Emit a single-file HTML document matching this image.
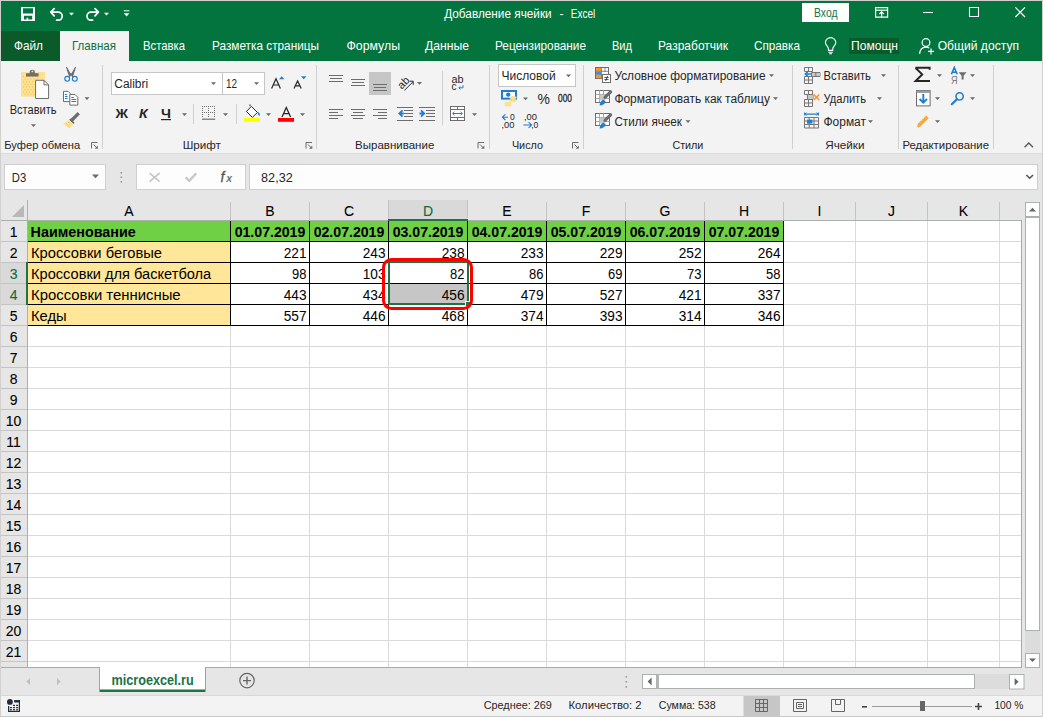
<!DOCTYPE html>
<html><head><meta charset="utf-8"><style>*{margin:0;padding:0}html,body{width:1043px;height:717px;overflow:hidden;background:#e6e6e6}svg{display:block}text{font-family:"Liberation Sans",sans-serif;white-space:pre}</style></head><body>
<svg width="1043" height="717" viewBox="0 0 1043 717" font-family="Liberation Sans">
<rect x="0" y="0" width="1043" height="717" fill="#d2cfcf" />
<rect x="1" y="1" width="1041" height="60" fill="#04743e" />
<text x="444.2" y="18.2" font-size="12" fill="#fff" textLength="107.50" lengthAdjust="spacingAndGlyphs">Добавление ячейки</text>
<text x="559.4" y="18.2" font-size="12" fill="#fff" textLength="4.00" lengthAdjust="spacingAndGlyphs">-</text>
<text x="570.7" y="18.2" font-size="12" fill="#fff" textLength="24.60" lengthAdjust="spacingAndGlyphs">Excel</text>
<rect x="802" y="3" width="47" height="19" fill="#fff" />
<text x="814" y="16.9" font-size="12" fill="#217346" textLength="23.50" lengthAdjust="spacingAndGlyphs">Вход</text>
<rect x="1" y="31" width="59" height="30" fill="#0a5a2a" />
<rect x="60" y="31" width="69" height="30" fill="#f3f3f3" />
<text x="14" y="49.9" font-size="12.2" fill="#fff" textLength="29.00" lengthAdjust="spacingAndGlyphs">Файл</text>
<text x="72" y="49.9" font-size="12.2" fill="#107040" textLength="44.00" lengthAdjust="spacingAndGlyphs">Главная</text>
<text x="143" y="49.9" font-size="12.2" fill="#fff" textLength="42.00" lengthAdjust="spacingAndGlyphs">Вставка</text>
<text x="212" y="49.9" font-size="12.2" fill="#fff" textLength="107.00" lengthAdjust="spacingAndGlyphs">Разметка страницы</text>
<text x="346.5" y="49.9" font-size="12.2" fill="#fff" textLength="53.50" lengthAdjust="spacingAndGlyphs">Формулы</text>
<text x="425" y="49.9" font-size="12.2" fill="#fff" textLength="44.00" lengthAdjust="spacingAndGlyphs">Данные</text>
<text x="495" y="49.9" font-size="12.2" fill="#fff" textLength="91.00" lengthAdjust="spacingAndGlyphs">Рецензирование</text>
<text x="612" y="49.9" font-size="12.2" fill="#fff" textLength="20.00" lengthAdjust="spacingAndGlyphs">Вид</text>
<text x="658" y="49.9" font-size="12.2" fill="#fff" textLength="70.00" lengthAdjust="spacingAndGlyphs">Разработчик</text>
<text x="754" y="49.9" font-size="12.2" fill="#fff" textLength="46.00" lengthAdjust="spacingAndGlyphs">Справка</text>
<rect x="849" y="38" width="50" height="16" fill="#0a5a2a" />
<text x="851" y="49.9" font-size="12.2" fill="#fff" textLength="47.00" lengthAdjust="spacingAndGlyphs">Помощн</text>
<text x="937.7" y="49.9" font-size="12.2" fill="#fff" textLength="81.30" lengthAdjust="spacingAndGlyphs">Общий доступ</text>
<rect x="1" y="61" width="1041" height="92" fill="#f3f3f3" />
<rect x="1" y="153" width="1041" height="1" fill="#dadada" />
<rect x="1" y="154" width="1041" height="46" fill="#e6e6e6" />
<rect x="102" y="65" width="1" height="84" fill="#d0d0d0" />
<rect x="316" y="65" width="1" height="84" fill="#d0d0d0" />
<rect x="489" y="65" width="1" height="84" fill="#d0d0d0" />
<rect x="583" y="65" width="1" height="84" fill="#d0d0d0" />
<rect x="792" y="65" width="1" height="84" fill="#d0d0d0" />
<rect x="898" y="65" width="1" height="84" fill="#d0d0d0" />
<rect x="993" y="65" width="1" height="84" fill="#d0d0d0" />
<text x="4.2" y="148.8" font-size="11" fill="#262626" textLength="76.00" lengthAdjust="spacingAndGlyphs">Буфер обмена</text>
<text x="182.7" y="148.8" font-size="11" fill="#262626" textLength="38.20" lengthAdjust="spacingAndGlyphs">Шрифт</text>
<text x="355.1" y="148.8" font-size="11" fill="#262626" textLength="79.20" lengthAdjust="spacingAndGlyphs">Выравнивание</text>
<text x="511.9" y="148.8" font-size="11" fill="#262626" textLength="31.10" lengthAdjust="spacingAndGlyphs">Число</text>
<text x="672.4" y="148.8" font-size="11" fill="#262626" textLength="31.00" lengthAdjust="spacingAndGlyphs">Стили</text>
<text x="825.2" y="148.8" font-size="11" fill="#262626" textLength="39.30" lengthAdjust="spacingAndGlyphs">Ячейки</text>
<text x="902.4" y="148.8" font-size="11" fill="#262626" textLength="86.60" lengthAdjust="spacingAndGlyphs">Редактирование</text>
<path fill-rule="evenodd" fill="#ffffff" d="M21 7h14v14h-14zM23 8.2v5.4h10v-5.4zM24 15.8v3.8h2.6v-1.8h1.6v1.8h4v-3.8z"/>
<g fill="none" stroke="#ffffff" stroke-width="1.7" stroke-linecap="round" stroke-linejoin="round"><path d="M51 12.2h7.2a4 4 0 0 1 0 8h-1.6"/><path d="M54.2 8.6l-3.4 3.6l3.4 3.6"/></g>
<path d="M69 12.8h5l-2.5 2.75z" fill="#ffffff"/>
<g fill="none" stroke="#ffffff" stroke-width="1.7" stroke-linecap="round" stroke-linejoin="round"><path d="M98.2 12.2h-7.2a4 4 0 0 0 0 8h1.6"/><path d="M95 8.6l3.4 3.6l-3.4 3.6"/></g>
<path d="M104 12.8h5l-2.5 2.75z" fill="#ffffff"/>
<path d="M123.8 10.8h5.6" stroke="#ffffff" stroke-width="1"/>
<path d="M123.8 13.3h5.6l-2.8 3.08z" fill="#ffffff"/>
<g fill="none" stroke="#ffffff" stroke-width="1.2"><path d="M875.6 7.6h12v9.6h-12z"/><path d="M875.6 10.2h12"/><path d="M881.6 17v-5.2"/><path d="M879.4 14l2.2-2.2l2.2 2.2"/></g>
<path d="M923 12.5h10" stroke="#ffffff" stroke-width="1.1"/>
<path d="M969.5 7.5h9v9h-9z" fill="none" stroke="#ffffff" stroke-width="1.1"/>
<path d="M1015.4 7.4l9.6 9.6M1025 7.4l-9.6 9.6" stroke="#ffffff" stroke-width="1.2"/>
<g fill="none" stroke="#ffffff" stroke-width="1.1"><path d="M828.4 50.4v-2c0-1.6-3-3.2-3-5.6a5.2 5.2 0 0 1 10.4 0c0 2.4-3 4-3 5.6v2z"/><path d="M828.4 52.2h4.4M829.2 53.8h2.8"/></g>
<g fill="none" stroke="#ffffff" stroke-width="1.2"><circle cx="926" cy="42.6" r="3.9"/><path d="M919.6 54c0.4-4.6 2.8-6.8 6.4-6.8c1.4 0 2.4 0.3 3.3 0.8"/><path d="M931 48.4v6M928 51.4h6"/></g>
<rect x="21" y="72" width="24" height="24.6" fill="#fde18e"/>
<g fill="#f0a030" opacity="0.55"><rect x="23.0" y="76.0" width="1" height="1"/><rect x="26.0" y="76.0" width="1" height="1"/><rect x="29.0" y="76.0" width="1" height="1"/><rect x="32.0" y="76.0" width="1" height="1"/><rect x="35.0" y="76.0" width="1" height="1"/><rect x="24.5" y="78.6" width="1" height="1"/><rect x="27.5" y="78.6" width="1" height="1"/><rect x="30.5" y="78.6" width="1" height="1"/><rect x="33.5" y="78.6" width="1" height="1"/><rect x="36.5" y="78.6" width="1" height="1"/><rect x="23.0" y="81.2" width="1" height="1"/><rect x="26.0" y="81.2" width="1" height="1"/><rect x="29.0" y="81.2" width="1" height="1"/><rect x="32.0" y="81.2" width="1" height="1"/><rect x="35.0" y="81.2" width="1" height="1"/><rect x="24.5" y="83.8" width="1" height="1"/><rect x="27.5" y="83.8" width="1" height="1"/><rect x="30.5" y="83.8" width="1" height="1"/><rect x="33.5" y="83.8" width="1" height="1"/><rect x="36.5" y="83.8" width="1" height="1"/><rect x="23.0" y="86.4" width="1" height="1"/><rect x="26.0" y="86.4" width="1" height="1"/><rect x="29.0" y="86.4" width="1" height="1"/><rect x="32.0" y="86.4" width="1" height="1"/><rect x="35.0" y="86.4" width="1" height="1"/><rect x="24.5" y="89.0" width="1" height="1"/><rect x="27.5" y="89.0" width="1" height="1"/><rect x="30.5" y="89.0" width="1" height="1"/><rect x="33.5" y="89.0" width="1" height="1"/><rect x="36.5" y="89.0" width="1" height="1"/><rect x="23.0" y="91.6" width="1" height="1"/><rect x="26.0" y="91.6" width="1" height="1"/><rect x="29.0" y="91.6" width="1" height="1"/><rect x="32.0" y="91.6" width="1" height="1"/><rect x="35.0" y="91.6" width="1" height="1"/><rect x="24.5" y="94.2" width="1" height="1"/><rect x="27.5" y="94.2" width="1" height="1"/><rect x="30.5" y="94.2" width="1" height="1"/><rect x="33.5" y="94.2" width="1" height="1"/><rect x="36.5" y="94.2" width="1" height="1"/></g>
<path d="M26 76.5v-3.2h3.8v-2.2a3 3 0 0 1 5 0v2.2h3.8v3.2z" fill="#6d6d6d"/>
<circle cx="32.4" cy="71.4" r="0.9" fill="#fde18e"/>
<path d="M35.6 80.3h8.4l4.6 4.6v13.6h-13z" fill="#fff" stroke="#6d6d6d" stroke-width="1"/>
<path d="M44 80.3v4.6h4.6" fill="none" stroke="#6d6d6d" stroke-width="1"/>
<path d="M31 124.3h5l-2.5 2.75z" fill="#6a6a6a"/>
<path d="M66.6 67.4l3.6 6.6l-0.6 2.6z M75.4 67.4l-3.6 6.6l0.6 2.6z" fill="#6d6d6d" stroke="#6d6d6d" stroke-width="1.1" stroke-linejoin="round"/>
<circle cx="71" cy="74.6" r="1.3" fill="#6d6d6d"/>
<g fill="none" stroke="#1e7fd0" stroke-width="1.15"><circle cx="67.2" cy="78.8" r="2.4"/><circle cx="74.8" cy="78.8" r="2.4"/></g>
<g fill="#fff" stroke="#6d6d6d" stroke-width="1"><path d="M63.5 91.3h4.6l2.2 2.2v8.1h-6.8z"/><path d="M69.8 94.5h5.2l2.8 2.8v7.8h-8z"/></g>
<g stroke="#1e7fd0" stroke-width="1"><path d="M65 94.5h2M65 96.5h2.6M65 98.5h2.6"/><path d="M71.4 97.5h2.4M71.4 99.5h4.8M71.4 101.5h4.8"/></g>
<path d="M84.5 97.3h5l-2.5 2.75z" fill="#6a6a6a"/>
<path d="M77.6 114.4l-5.4 5.4" stroke="#6d6d6d" stroke-width="3.4" stroke-linecap="square"/>
<path d="M70.4 118.6l4.2 4.2l-1.2 1.2l-4.2-4.2z" fill="#6d6d6d"/>
<path d="M68.8 120.2l4.2 4.2l-3.4 4l-6.6-4.6z" fill="#fde18e"/>
<path d="M66.4 123.6l0.8 0.8M68.6 122.4l0.8 0.8M68 125.6l0.8 0.8" stroke="#f0a030" stroke-width="0.9"/>
<rect x="111.5" y="72.5" width="111" height="22" fill="#fff" stroke="#c6c6c6"/>
<rect x="222.5" y="72.5" width="42" height="22" fill="#fff" stroke="#c6c6c6"/>
<path d="M211 82.3h5l-2.5 2.75z" fill="#6a6a6a"/>
<path d="M254 82.3h5l-2.5 2.75z" fill="#6a6a6a"/>
<path d="M271.6 88.6l4.4-9.8l4.4 9.8M273.2 85h5.6" fill="none" stroke="#262626" stroke-width="1.2"/>
<path d="M279 79.2l2.7-3l2.7 3z" fill="#1e7fd0"/>
<path d="M294 88.6l3.6-7.6l3.6 7.6M295.4 85.8h4.4" fill="none" stroke="#262626" stroke-width="1.2"/>
<path d="M301 76.2h5.4l-2.7 3z" fill="#1e7fd0"/>
<rect x="161" y="119" width="10" height="1.2" fill="#262626"/>
<path d="M182 113.3h5l-2.5 2.75z" fill="#6a6a6a"/>
<rect x="193" y="104" width="1" height="20" fill="#d0d0d0"/>
<g fill="#6d6d6d"><rect x="202" y="106" width="1" height="1"/><rect x="202" y="112" width="1" height="1"/><rect x="204" y="106" width="1" height="1"/><rect x="204" y="112" width="1" height="1"/><rect x="206" y="106" width="1" height="1"/><rect x="206" y="112" width="1" height="1"/><rect x="208" y="106" width="1" height="1"/><rect x="208" y="112" width="1" height="1"/><rect x="210" y="106" width="1" height="1"/><rect x="210" y="112" width="1" height="1"/><rect x="212" y="106" width="1" height="1"/><rect x="212" y="112" width="1" height="1"/><rect x="214" y="106" width="1" height="1"/><rect x="214" y="112" width="1" height="1"/><rect x="202" y="106" width="1" height="1"/><rect x="202" y="108" width="1" height="1"/><rect x="202" y="110" width="1" height="1"/><rect x="202" y="112" width="1" height="1"/><rect x="202" y="114" width="1" height="1"/><rect x="202" y="116" width="1" height="1"/><rect x="208" y="106" width="1" height="1"/><rect x="208" y="108" width="1" height="1"/><rect x="208" y="110" width="1" height="1"/><rect x="208" y="112" width="1" height="1"/><rect x="208" y="114" width="1" height="1"/><rect x="208" y="116" width="1" height="1"/><rect x="214" y="106" width="1" height="1"/><rect x="214" y="108" width="1" height="1"/><rect x="214" y="110" width="1" height="1"/><rect x="214" y="112" width="1" height="1"/><rect x="214" y="114" width="1" height="1"/><rect x="214" y="116" width="1" height="1"/></g>
<rect x="202" y="118.6" width="13.2" height="1.2" fill="#6d6d6d"/>
<path d="M223 113.3h5l-2.5 2.75z" fill="#6a6a6a"/>
<rect x="236" y="104" width="1" height="20" fill="#d0d0d0"/>
<path d="M246.4 111.4l5-5l6 6l-5 5z" fill="#fff" stroke="#262626" stroke-width="1"/>
<path d="M250 106.2v-1.8" stroke="#262626" stroke-width="1"/>
<path d="M257.6 112.4c1.2-0.6 2.6 1 2.2 3.6c-1-0.4-2.4-2-2.2-3.6z" fill="#1e7fd0"/>
<rect x="244" y="118" width="16" height="3.8" fill="#ffff00"/>
<path d="M266 113.3h5l-2.5 2.75z" fill="#6a6a6a"/>
<path d="M282 117l4.3-9.4l4.3 9.4M283.6 113.6h5.4" fill="none" stroke="#262626" stroke-width="1.3"/>
<rect x="278" y="118" width="16" height="3.8" fill="#ff0000"/>
<path d="M300 113.3h5l-2.5 2.75z" fill="#6a6a6a"/>
<rect x="369" y="72" width="22" height="23" fill="#c6c6c6"/>
<rect x="329" y="75" width="14" height="1" fill="#6d6d6d"/><rect x="330" y="78" width="12" height="1" fill="#6d6d6d"/><rect x="329" y="81" width="14" height="1" fill="#6d6d6d"/>
<rect x="351" y="79" width="14" height="1" fill="#6d6d6d"/><rect x="352" y="82" width="12" height="1" fill="#6d6d6d"/><rect x="351" y="85" width="14" height="1" fill="#6d6d6d"/>
<rect x="373" y="84" width="14" height="1" fill="#6d6d6d"/><rect x="374" y="87" width="12" height="1" fill="#6d6d6d"/><rect x="373" y="90" width="14" height="1" fill="#6d6d6d"/>
<g transform="translate(403.6 82.6) rotate(-45)"><text x="-6.4" y="3.6" font-family="Liberation Sans" font-size="11" fill="#262626">ab</text></g>
<path d="M404.4 90.4l8.4-8.4M409.6 81.2h3.6v3.6" fill="none" stroke="#262626" stroke-width="1"/>
<path d="M417 82h5l-2.5 2.75z" fill="#6a6a6a"/>
<rect x="442" y="71" width="1" height="54" fill="#d0d0d0"/>
<text x="451.6" y="83" font-family="Liberation Sans" font-size="10" fill="#262626" textLength="12" lengthAdjust="spacingAndGlyphs">ab</text>
<text x="451.6" y="90" font-family="Liberation Sans" font-size="10" fill="#262626">c</text>
<path d="M463 85.2v2.6h-4M460.4 86.4l-1.6 1.4l1.6 1.4" fill="none" stroke="#1e7fd0" stroke-width="1"/>
<rect x="329" y="109" width="14" height="1" fill="#6d6d6d"/><rect x="329" y="112" width="9" height="1" fill="#6d6d6d"/><rect x="329" y="115" width="14" height="1" fill="#6d6d6d"/><rect x="329" y="118" width="9" height="1" fill="#6d6d6d"/>
<rect x="351" y="109" width="14" height="1" fill="#6d6d6d"/><rect x="353" y="112" width="10" height="1" fill="#6d6d6d"/><rect x="351" y="115" width="14" height="1" fill="#6d6d6d"/><rect x="353" y="118" width="10" height="1" fill="#6d6d6d"/>
<rect x="373" y="109" width="14" height="1" fill="#6d6d6d"/><rect x="378" y="112" width="9" height="1" fill="#6d6d6d"/><rect x="373" y="115" width="14" height="1" fill="#6d6d6d"/><rect x="378" y="118" width="9" height="1" fill="#6d6d6d"/>
<rect x="397" y="107" width="16" height="1" fill="#6d6d6d"/><rect x="397" y="120" width="16" height="1" fill="#6d6d6d"/>
<rect x="404" y="110" width="9" height="1" fill="#6d6d6d"/><rect x="404" y="113" width="9" height="1" fill="#6d6d6d"/><rect x="404" y="116" width="9" height="1" fill="#6d6d6d"/>
<path d="M402.5 110.4l-3.2 3.1l3.2 3.1M399.6 113.5h4.2" fill="none" stroke="#1e7fd0" stroke-width="1.8"/>
<rect x="419" y="107" width="16" height="1" fill="#6d6d6d"/><rect x="419" y="120" width="16" height="1" fill="#6d6d6d"/>
<rect x="426" y="110" width="9" height="1" fill="#6d6d6d"/><rect x="426" y="113" width="9" height="1" fill="#6d6d6d"/><rect x="426" y="116" width="9" height="1" fill="#6d6d6d"/>
<path d="M421 110.4l3.2 3.1l-3.2 3.1M419.5 113.5h4.5" fill="none" stroke="#1e7fd0" stroke-width="1.8"/>
<rect x="450.5" y="106.5" width="14" height="14" fill="#fff" stroke="#6d6d6d" stroke-width="1"/>
<path d="M450.5 109.5h14M450.5 117.5h14M457.5 106.5v3M457.5 117.5v3" stroke="#6d6d6d" stroke-width="1"/>
<path d="M452.5 113.5h10M454.5 111.8l-1.8 1.7l1.8 1.7M460.5 111.8l1.8 1.7l-1.8 1.7" fill="none" stroke="#1e7fd0" stroke-width="1"/>
<path d="M472 113.3h5l-2.5 2.75z" fill="#6a6a6a"/>
<rect x="498.5" y="64.5" width="77" height="22" fill="#fff" stroke="#c6c6c6"/>
<path d="M566 74.6h5l-2.5 2.75z" fill="#6a6a6a"/>
<rect x="501" y="90" width="16" height="9.6" fill="#1e7fd0"/>
<rect x="503" y="92" width="12" height="5.6" fill="#fff"/>
<circle cx="508.2" cy="94.6" r="2.2" fill="#1e7fd0"/>
<g fill="#fde18e"><ellipse cx="513" cy="97.6" rx="3.6" ry="1.5"/><ellipse cx="513" cy="100.6" rx="3.6" ry="1.5"/><ellipse cx="508" cy="103" rx="3.6" ry="1.5"/><ellipse cx="508" cy="105.2" rx="3.6" ry="1.3"/></g>
<path d="M523 97.6h5l-2.5 2.75z" fill="#6a6a6a"/>
<text x="537.6" y="104.4" font-family="Liberation Sans" font-size="14" fill="#262626" textLength="12.4" lengthAdjust="spacingAndGlyphs">%</text>
<text x="558" y="101.6" font-family="Liberation Sans" font-size="10.2" fill="#262626" stroke="#262626" stroke-width="0.3" textLength="14" lengthAdjust="spacingAndGlyphs">000</text>
<text x="510" y="120" font-family="Liberation Sans" font-size="8.5" fill="#262626">0</text>
<text x="501.4" y="127.6" font-family="Liberation Sans" font-size="8.5" fill="#262626" textLength="13" lengthAdjust="spacingAndGlyphs">,00</text>
<path d="M505.4 114.4l-3 2.8l3 2.8M502.6 117.2h5.4" fill="none" stroke="#1e7fd0" stroke-width="1.1"/>
<text x="524" y="120" font-family="Liberation Sans" font-size="8.5" fill="#262626" textLength="13" lengthAdjust="spacingAndGlyphs">,00</text>
<text x="531.2" y="127.6" font-family="Liberation Sans" font-size="8.5" fill="#262626">,0</text>
<path d="M528.6 122.2l3 2.8l-3 2.8M523.4 125h7.6" fill="none" stroke="#1e7fd0" stroke-width="1.1"/>
<rect x="595.5" y="67.5" width="13" height="11" fill="#fff" stroke="#6d6d6d"/>
<rect x="596" y="68" width="5" height="3" fill="#f79433"/><rect x="596" y="71.6" width="5" height="3" fill="#3c8fd8"/><rect x="596" y="75.2" width="5" height="3" fill="#f79433"/>
<path d="M601.5 68v10M595.5 71.3h13M595.5 74.8h13M605 68v4" stroke="#6d6d6d" stroke-width="0.8"/>
<rect x="602.5" y="74.5" width="8" height="8" fill="#fff" stroke="#6d6d6d"/>
<path d="M604.4 77.4h4.2M604.4 79.4h4.2M607.6 76l-2 5" stroke="#262626" stroke-width="0.8"/>
<path d="M769 74.3h5l-2.5 2.75z" fill="#6a6a6a"/>
<rect x="595.5" y="90.5" width="14" height="12" fill="#fff" stroke="#6d6d6d"/>
<path d="M599.5 90v12M603.5 90v12M595.5 94.5h14M595.5 98.5h14" stroke="#9a9a9a" stroke-width="0.9"/>
<rect x="599.5" y="94.5" width="6" height="6" fill="#c8c8c8"/>
<path d="M610.6 91.8l-5.6 5.6" stroke="#6d6d6d" stroke-width="3.2" stroke-linecap="round"/>
<path d="M603.4 99.4l2.4 2.4c-0.8 2-2.8 3.6-6.2 3.8c0.3-3 1.6-5.4 3.8-6.2z" fill="#1e7fd0"/>
<rect x="595.5" y="113.5" width="14" height="12" fill="#fff" stroke="#6d6d6d"/>
<path d="M599.5 113v12M603.5 113v12M595.5 117.5h14M595.5 121.5h14" stroke="#9a9a9a" stroke-width="0.9"/>
<rect x="599.5" y="117.5" width="6" height="6" fill="#c8c8c8"/>
<path d="M610.6 114.8l-5.6 5.6" stroke="#6d6d6d" stroke-width="3.2" stroke-linecap="round"/>
<path d="M603.4 122.4l2.4 2.4c-0.8 2-2.8 3.6-6.2 3.8c0.3-3 1.6-5.4 3.8-6.2z" fill="#1e7fd0"/>
<path d="M773 97.3h5l-2.5 2.75z" fill="#6a6a6a"/>
<path d="M685.5 120.3h5l-2.5 2.75z" fill="#6a6a6a"/>
<g fill="none" stroke="#777777" stroke-width="1"><path d="M804.5 67.5h8v4h-8zM808.5 67.5v4"/><path d="M804.5 76.5h8v7h-8zM804.5 80h8M808.5 76.5v7"/><path d="M811.5 72.5h8.5v4h-8.5zM815.8 72.5v4"/></g>
<rect x="812" y="73" width="7.6" height="3" fill="#c8c8c8"/>
<path d="M815.8 72.5v4" stroke="#777777"/>
<path d="M808.2 71.2l-2.8 2.8l2.8 2.8M805.6 74h5.6" fill="none" stroke="#1e7fd0" stroke-width="1.6"/>
<path d="M881 74.3h5l-2.5 2.75z" fill="#6a6a6a"/>
<g fill="none" stroke="#777777" stroke-width="1"><path d="M804.5 90.5h8v4h-8zM808.5 90.5v4"/><path d="M804.5 99.5h8v7h-8zM804.5 103h8M808.5 99.5v7"/><path d="M807.5 94.5h5.5v5h-5.5z"/></g>
<rect x="808" y="95" width="4.6" height="4" fill="#c8c8c8"/>
<path d="M813.8 94.6l5.4 5.4M819.2 94.6l-5.4 5.4" stroke="#f7943a" stroke-width="1.5"/>
<path d="M877 97.3h5l-2.5 2.75z" fill="#6a6a6a"/>
<path d="M804.6 112.6v3M818.4 112.6v3M805 114.1h13" stroke="#1e7fd0" stroke-width="1.1"/>
<path d="M806.4 112.6l-1.4 1.5l1.4 1.5M816.6 112.6l1.4 1.5l-1.4 1.5" fill="none" stroke="#1e7fd0" stroke-width="0.9"/>
<g fill="none" stroke="#777777" stroke-width="1"><path d="M804.5 117.5h14v10.5h-14z"/><path d="M804.5 121h14M804.5 124.5h14M809.2 117.5v10.5M814 117.5v10.5"/></g>
<rect x="807" y="119.6" width="5.4" height="4" fill="#1e7fd0"/>
<path d="M868 120.3h5l-2.5 2.75z" fill="#6a6a6a"/>
<path d="M915.4 67.8h14.2v2M930 81h-14.4l6.6-6.6l-6.6-6.4" fill="none" stroke="#262626" stroke-width="2"/>
<path d="M937 74.3h5l-2.5 2.75z" fill="#6a6a6a"/>
<path d="M951.4 74.2l2.9-6.6l2.9 6.6M952.4 72.2h3.8" fill="none" stroke="#1e7fd0" stroke-width="1.6"/>
<text x="951" y="83.6" font-family="Liberation Sans" font-size="10" fill="#7a7a7a" textLength="6.6" lengthAdjust="spacingAndGlyphs">Я</text>
<path d="M958.6 72.2h8l-3 3.6v3.6h-2v-3.6z" fill="#6d6d6d"/>
<path d="M970 74.3h5l-2.5 2.75z" fill="#6a6a6a"/>
<rect x="916.5" y="90.5" width="13.6" height="15.4" fill="#fff" stroke="#6d6d6d"/>
<rect x="916.5" y="90.5" width="13.6" height="2.4" fill="#9a9a9a"/>
<path d="M923.3 94v8.6M919.6 99l3.7 3.6l3.7-3.6" fill="none" stroke="#1e7fd0" stroke-width="1.9"/>
<path d="M935 97.3h5l-2.5 2.75z" fill="#6a6a6a"/>
<circle cx="959.6" cy="96.4" r="3.6" fill="none" stroke="#1e7fd0" stroke-width="1.6"/>
<path d="M957 99.2l-5.2 5" stroke="#1e7fd0" stroke-width="2.2" stroke-linecap="round"/>
<path d="M970 97.3h5l-2.5 2.75z" fill="#6a6a6a"/>
<path d="M917.4 124.2l8.6-8.6l2.6 2.6l-8.6 8.6z" fill="#f7a534"/>
<g fill="#fde18e"><rect x="919.6" y="121.6" width="1" height="1"/><rect x="921.3" y="119.9" width="1" height="1"/><rect x="923.0" y="118.2" width="1" height="1"/><rect x="924.7" y="116.5" width="1" height="1"/><rect x="926.4" y="114.8" width="1" height="1"/></g>
<path d="M916.8 126.2l1.8-1.8l1.6 1.6l-1.8 1.8z" fill="#f7a534"/>
<path d="M935 120.3h5l-2.5 2.75z" fill="#6a6a6a"/>
<g fill="none" stroke="#6d6d6d" stroke-width="1"><path d="M91.5 148.5v-6h6"/><path d="M93.5 144.5l3.6 3.6"/></g><path d="M94.6 148.8h3.2v-3.2z" fill="#6d6d6d"/>
<g fill="none" stroke="#6d6d6d" stroke-width="1"><path d="M306.0 148.5v-6h6"/><path d="M308.0 144.5l3.6 3.6"/></g><path d="M309.1 148.8h3.2v-3.2z" fill="#6d6d6d"/>
<g fill="none" stroke="#6d6d6d" stroke-width="1"><path d="M478.0 148.5v-6h6"/><path d="M480.0 144.5l3.6 3.6"/></g><path d="M481.1 148.8h3.2v-3.2z" fill="#6d6d6d"/>
<g fill="none" stroke="#6d6d6d" stroke-width="1"><path d="M572.5 148.5v-6h6"/><path d="M574.5 144.5l3.6 3.6"/></g><path d="M575.6 148.8h3.2v-3.2z" fill="#6d6d6d"/>
<path d="M1024.6 147.2l4.2-4.2l4.2 4.2" fill="none" stroke="#555" stroke-width="1.3"/>
<text x="9.7" y="114.3" font-size="12" fill="#262626" textLength="46.80" lengthAdjust="spacingAndGlyphs">Вставить</text>
<text x="114.3" y="88" font-size="12.5" fill="#262626" textLength="33.80" lengthAdjust="spacingAndGlyphs">Calibri</text>
<text x="226" y="88" font-size="12.5" fill="#262626" textLength="11.00" lengthAdjust="spacingAndGlyphs">12</text>
<text x="115.5" y="118" font-size="12" fill="#262626" font-weight="bold" textLength="12.50" lengthAdjust="spacingAndGlyphs">Ж</text>
<text x="139" y="118" font-size="12" font-weight="bold" font-style="italic" fill="#262626" textLength="8.7" lengthAdjust="spacingAndGlyphs">К</text>
<text x="161" y="118" font-size="12" fill="#262626" font-weight="bold" textLength="10.00" lengthAdjust="spacingAndGlyphs">Ч</text>
<text x="501.5" y="79.7" font-size="12.5" fill="#262626" textLength="54.20" lengthAdjust="spacingAndGlyphs">Числовой</text>
<text x="614.4" y="79.8" font-size="12" fill="#262626" textLength="151.20" lengthAdjust="spacingAndGlyphs">Условное форматирование</text>
<text x="614.4" y="102.7" font-size="12" fill="#262626" textLength="155.50" lengthAdjust="spacingAndGlyphs">Форматировать как таблицу</text>
<text x="614.4" y="125.6" font-size="12" fill="#262626" textLength="67.60" lengthAdjust="spacingAndGlyphs">Стили ячеек</text>
<text x="823.5" y="79.8" font-size="12" fill="#262626" textLength="47.40" lengthAdjust="spacingAndGlyphs">Вставить</text>
<text x="823.5" y="102.7" font-size="12" fill="#262626" textLength="42.50" lengthAdjust="spacingAndGlyphs">Удалить</text>
<text x="823.5" y="125.6" font-size="12" fill="#262626" textLength="42.50" lengthAdjust="spacingAndGlyphs">Формат</text>
<rect x="4.5" y="164.5" width="101" height="25" fill="#fdfdfd" stroke="#cfcfcf"/>
<text x="11.8" y="181.8" font-size="12.5" fill="#262626" textLength="14.40" lengthAdjust="spacingAndGlyphs">D3</text>
<path d="M92 174.4h7l-3.5 3.85z" fill="#6a6a6a"/>
<rect x="120.5" y="172" width="1.6" height="1.6" fill="#9a9a9a" />
<rect x="120.5" y="176.5" width="1.6" height="1.6" fill="#9a9a9a" />
<rect x="120.5" y="181" width="1.6" height="1.6" fill="#9a9a9a" />
<rect x="136.5" y="164.5" width="109" height="25" fill="#fdfdfd" stroke="#cfcfcf"/>
<path d="M149.6 173.2l10 8.4M159.6 173.2l-10 8.4" stroke="#c4c4c4" stroke-width="1.6"/>
<path d="M185.6 177.2l3.6 3.6l7-7.4" fill="none" stroke="#c8c8c8" stroke-width="2.3"/>
<text x="220.6" y="182" font-family="Liberation Serif" font-style="italic" font-size="14" fill="#555" stroke="#555" stroke-width="0.3">f</text><text x="226.4" y="182" font-family="Liberation Serif" font-style="italic" font-size="10.5" fill="#555" stroke="#555" stroke-width="0.2">x</text>
<rect x="249.5" y="164.5" width="788" height="25" fill="#fdfdfd" stroke="#cfcfcf"/>
<text x="261.1" y="181.9" font-size="12.5" fill="#262626" textLength="31.60" lengthAdjust="spacingAndGlyphs">82,32</text>
<path d="M1026.4 175l3.3 3.2l3.3-3.2" fill="none" stroke="#555" stroke-width="1.6"/>
<rect x="1" y="200" width="1021" height="467" fill="#e6e6e6" />
<rect x="28" y="221" width="993" height="446" fill="#fff" />
<rect x="230" y="202" width="1" height="18" fill="#c4c4c4" />
<text x="129.0" y="215.6" font-size="14" text-anchor="middle" fill="#000000" stroke="#000000" stroke-width="0.08">A</text>
<rect x="309" y="202" width="1" height="18" fill="#c4c4c4" />
<text x="270.0" y="215.6" font-size="14" text-anchor="middle" fill="#000000" stroke="#000000" stroke-width="0.08">B</text>
<rect x="388" y="202" width="1" height="18" fill="#c4c4c4" />
<text x="349.0" y="215.6" font-size="14" text-anchor="middle" fill="#000000" stroke="#000000" stroke-width="0.08">C</text>
<rect x="389" y="200" width="78" height="20" fill="#d9d9d9" />
<rect x="388" y="200" width="1" height="20" fill="#c4c4c4" />
<rect x="467" y="200" width="1" height="18" fill="#c4c4c4" />
<text x="428.0" y="215.6" font-size="14" text-anchor="middle" fill="#0f6b38" stroke="#0f6b38" stroke-width="0.08">D</text>
<rect x="546" y="202" width="1" height="18" fill="#c4c4c4" />
<text x="507.0" y="215.6" font-size="14" text-anchor="middle" fill="#000000" stroke="#000000" stroke-width="0.08">E</text>
<rect x="625" y="202" width="1" height="18" fill="#c4c4c4" />
<text x="586.0" y="215.6" font-size="14" text-anchor="middle" fill="#000000" stroke="#000000" stroke-width="0.08">F</text>
<rect x="704" y="202" width="1" height="18" fill="#c4c4c4" />
<text x="665.0" y="215.6" font-size="14" text-anchor="middle" fill="#000000" stroke="#000000" stroke-width="0.08">G</text>
<rect x="783" y="202" width="1" height="18" fill="#c4c4c4" />
<text x="744.0" y="215.6" font-size="14" text-anchor="middle" fill="#000000" stroke="#000000" stroke-width="0.08">H</text>
<rect x="855" y="202" width="1" height="18" fill="#c4c4c4" />
<text x="819.5" y="215.6" font-size="14" text-anchor="middle" fill="#000000" stroke="#000000" stroke-width="0.08">I</text>
<rect x="927" y="202" width="1" height="18" fill="#c4c4c4" />
<text x="891.5" y="215.6" font-size="14" text-anchor="middle" fill="#000000" stroke="#000000" stroke-width="0.08">J</text>
<rect x="999" y="202" width="1" height="18" fill="#c4c4c4" />
<text x="963.5" y="215.6" font-size="14" text-anchor="middle" fill="#000000" stroke="#000000" stroke-width="0.08">K</text>
<rect x="388" y="219" width="80" height="2" fill="#217346" />
<rect x="1" y="220" width="1021" height="1" fill="#abb0ad" />
<rect x="27" y="200" width="1" height="467" fill="#abb0ad" />
<path d="M12 217h12v-12z" fill="#b6b9b7"/>
<rect x="1" y="241" width="26" height="1" fill="#c4c4c4" />
<text x="13.6" y="236.7" font-size="14" text-anchor="middle" fill="#000000" stroke="#000000" stroke-width="0.08">1</text>
<rect x="1" y="262" width="26" height="1" fill="#c4c4c4" />
<text x="13.6" y="257.7" font-size="14" text-anchor="middle" fill="#000000" stroke="#000000" stroke-width="0.08">2</text>
<rect x="1" y="263" width="26" height="20" fill="#d9d9d9" />
<rect x="1" y="283" width="26" height="1" fill="#c4c4c4" />
<text x="13.6" y="278.7" font-size="14" text-anchor="middle" fill="#0f6b38" stroke="#0f6b38" stroke-width="0.08">3</text>
<rect x="1" y="284" width="26" height="20" fill="#d9d9d9" />
<rect x="1" y="304" width="26" height="1" fill="#c4c4c4" />
<text x="13.6" y="299.7" font-size="14" text-anchor="middle" fill="#0f6b38" stroke="#0f6b38" stroke-width="0.08">4</text>
<rect x="1" y="325" width="26" height="1" fill="#c4c4c4" />
<text x="13.6" y="320.7" font-size="14" text-anchor="middle" fill="#000000" stroke="#000000" stroke-width="0.08">5</text>
<rect x="1" y="346" width="26" height="1" fill="#c4c4c4" />
<text x="13.6" y="341.7" font-size="14" text-anchor="middle" fill="#000000" stroke="#000000" stroke-width="0.08">6</text>
<rect x="1" y="367" width="26" height="1" fill="#c4c4c4" />
<text x="13.6" y="362.7" font-size="14" text-anchor="middle" fill="#000000" stroke="#000000" stroke-width="0.08">7</text>
<rect x="1" y="388" width="26" height="1" fill="#c4c4c4" />
<text x="13.6" y="383.7" font-size="14" text-anchor="middle" fill="#000000" stroke="#000000" stroke-width="0.08">8</text>
<rect x="1" y="409" width="26" height="1" fill="#c4c4c4" />
<text x="13.6" y="404.7" font-size="14" text-anchor="middle" fill="#000000" stroke="#000000" stroke-width="0.08">9</text>
<rect x="1" y="430" width="26" height="1" fill="#c4c4c4" />
<text x="13.6" y="425.7" font-size="14" text-anchor="middle" fill="#000000" stroke="#000000" stroke-width="0.08">10</text>
<rect x="1" y="451" width="26" height="1" fill="#c4c4c4" />
<text x="13.6" y="446.7" font-size="14" text-anchor="middle" fill="#000000" stroke="#000000" stroke-width="0.08">11</text>
<rect x="1" y="472" width="26" height="1" fill="#c4c4c4" />
<text x="13.6" y="467.7" font-size="14" text-anchor="middle" fill="#000000" stroke="#000000" stroke-width="0.08">12</text>
<rect x="1" y="493" width="26" height="1" fill="#c4c4c4" />
<text x="13.6" y="488.7" font-size="14" text-anchor="middle" fill="#000000" stroke="#000000" stroke-width="0.08">13</text>
<rect x="1" y="514" width="26" height="1" fill="#c4c4c4" />
<text x="13.6" y="509.7" font-size="14" text-anchor="middle" fill="#000000" stroke="#000000" stroke-width="0.08">14</text>
<rect x="1" y="535" width="26" height="1" fill="#c4c4c4" />
<text x="13.6" y="530.7" font-size="14" text-anchor="middle" fill="#000000" stroke="#000000" stroke-width="0.08">15</text>
<rect x="1" y="556" width="26" height="1" fill="#c4c4c4" />
<text x="13.6" y="551.7" font-size="14" text-anchor="middle" fill="#000000" stroke="#000000" stroke-width="0.08">16</text>
<rect x="1" y="577" width="26" height="1" fill="#c4c4c4" />
<text x="13.6" y="572.7" font-size="14" text-anchor="middle" fill="#000000" stroke="#000000" stroke-width="0.08">17</text>
<rect x="1" y="598" width="26" height="1" fill="#c4c4c4" />
<text x="13.6" y="593.7" font-size="14" text-anchor="middle" fill="#000000" stroke="#000000" stroke-width="0.08">18</text>
<rect x="1" y="619" width="26" height="1" fill="#c4c4c4" />
<text x="13.6" y="614.7" font-size="14" text-anchor="middle" fill="#000000" stroke="#000000" stroke-width="0.08">19</text>
<rect x="1" y="640" width="26" height="1" fill="#c4c4c4" />
<text x="13.6" y="635.7" font-size="14" text-anchor="middle" fill="#000000" stroke="#000000" stroke-width="0.08">20</text>
<rect x="1" y="661" width="26" height="1" fill="#c4c4c4" />
<text x="13.6" y="656.7" font-size="14" text-anchor="middle" fill="#000000" stroke="#000000" stroke-width="0.08">21</text>
<rect x="1" y="682" width="26" height="1" fill="#c4c4c4" />
<rect x="26" y="262" width="2" height="43" fill="#217346" />
<rect x="230" y="221" width="1" height="446" fill="#dadada" />
<rect x="309" y="221" width="1" height="446" fill="#dadada" />
<rect x="388" y="221" width="1" height="446" fill="#dadada" />
<rect x="467" y="221" width="1" height="446" fill="#dadada" />
<rect x="546" y="221" width="1" height="446" fill="#dadada" />
<rect x="625" y="221" width="1" height="446" fill="#dadada" />
<rect x="704" y="221" width="1" height="446" fill="#dadada" />
<rect x="783" y="221" width="1" height="446" fill="#dadada" />
<rect x="855" y="221" width="1" height="446" fill="#dadada" />
<rect x="927" y="221" width="1" height="446" fill="#dadada" />
<rect x="999" y="221" width="1" height="446" fill="#dadada" />
<rect x="28" y="241" width="993" height="1" fill="#dadada" />
<rect x="28" y="262" width="993" height="1" fill="#dadada" />
<rect x="28" y="283" width="993" height="1" fill="#dadada" />
<rect x="28" y="304" width="993" height="1" fill="#dadada" />
<rect x="28" y="325" width="993" height="1" fill="#dadada" />
<rect x="28" y="346" width="993" height="1" fill="#dadada" />
<rect x="28" y="367" width="993" height="1" fill="#dadada" />
<rect x="28" y="388" width="993" height="1" fill="#dadada" />
<rect x="28" y="409" width="993" height="1" fill="#dadada" />
<rect x="28" y="430" width="993" height="1" fill="#dadada" />
<rect x="28" y="451" width="993" height="1" fill="#dadada" />
<rect x="28" y="472" width="993" height="1" fill="#dadada" />
<rect x="28" y="493" width="993" height="1" fill="#dadada" />
<rect x="28" y="514" width="993" height="1" fill="#dadada" />
<rect x="28" y="535" width="993" height="1" fill="#dadada" />
<rect x="28" y="556" width="993" height="1" fill="#dadada" />
<rect x="28" y="577" width="993" height="1" fill="#dadada" />
<rect x="28" y="598" width="993" height="1" fill="#dadada" />
<rect x="28" y="619" width="993" height="1" fill="#dadada" />
<rect x="28" y="640" width="993" height="1" fill="#dadada" />
<rect x="28" y="661" width="993" height="1" fill="#dadada" />
<rect x="28" y="221" width="755" height="20" fill="#6fd046" />
<rect x="28" y="242" width="202" height="83" fill="#ffe699" />
<rect x="389" y="284" width="78" height="20" fill="#c6c6c6" />
<rect x="28" y="241" width="756" height="1" fill="#000" />
<rect x="28" y="262" width="756" height="1" fill="#000" />
<rect x="28" y="283" width="756" height="1" fill="#000" />
<rect x="28" y="304" width="756" height="1" fill="#000" />
<rect x="28" y="325" width="756" height="1" fill="#000" />
<rect x="230" y="221" width="1" height="105" fill="#000" />
<rect x="309" y="221" width="1" height="105" fill="#000" />
<rect x="388" y="221" width="1" height="105" fill="#000" />
<rect x="467" y="221" width="1" height="105" fill="#000" />
<rect x="546" y="221" width="1" height="105" fill="#000" />
<rect x="625" y="221" width="1" height="105" fill="#000" />
<rect x="704" y="221" width="1" height="105" fill="#000" />
<rect x="783" y="221" width="1" height="105" fill="#000" />
<rect x="26" y="262" width="2" height="43" fill="#217346" />
<rect x="388" y="219" width="80" height="2" fill="#217346" />
<text x="30.6" y="236.7" font-size="14" fill="#000" font-weight="bold" textLength="105.20" lengthAdjust="spacingAndGlyphs">Наименование</text>
<text x="234.65" y="236.7" font-size="14" fill="#000" font-weight="bold" textLength="70.70" lengthAdjust="spacingAndGlyphs">01.07.2019</text>
<text x="313.65" y="236.7" font-size="14" fill="#000" font-weight="bold" textLength="70.70" lengthAdjust="spacingAndGlyphs">02.07.2019</text>
<text x="392.65" y="236.7" font-size="14" fill="#000" font-weight="bold" textLength="70.70" lengthAdjust="spacingAndGlyphs">03.07.2019</text>
<text x="471.65" y="236.7" font-size="14" fill="#000" font-weight="bold" textLength="70.70" lengthAdjust="spacingAndGlyphs">04.07.2019</text>
<text x="550.65" y="236.7" font-size="14" fill="#000" font-weight="bold" textLength="70.70" lengthAdjust="spacingAndGlyphs">05.07.2019</text>
<text x="629.65" y="236.7" font-size="14" fill="#000" font-weight="bold" textLength="70.70" lengthAdjust="spacingAndGlyphs">06.07.2019</text>
<text x="708.65" y="236.7" font-size="14" fill="#000" font-weight="bold" textLength="70.70" lengthAdjust="spacingAndGlyphs">07.07.2019</text>
<text x="31" y="257.7" font-size="14" fill="#000" textLength="131.00" lengthAdjust="spacingAndGlyphs">Кроссовки беговые</text>
<text x="283.7" y="257.7" font-size="14" fill="#000" textLength="22.80" lengthAdjust="spacingAndGlyphs">221</text>
<text x="362.7" y="257.7" font-size="14" fill="#000" textLength="22.80" lengthAdjust="spacingAndGlyphs">243</text>
<text x="441.7" y="257.7" font-size="14" fill="#000" textLength="22.80" lengthAdjust="spacingAndGlyphs">238</text>
<text x="520.7" y="257.7" font-size="14" fill="#000" textLength="22.80" lengthAdjust="spacingAndGlyphs">233</text>
<text x="599.7" y="257.7" font-size="14" fill="#000" textLength="22.80" lengthAdjust="spacingAndGlyphs">229</text>
<text x="678.7" y="257.7" font-size="14" fill="#000" textLength="22.80" lengthAdjust="spacingAndGlyphs">252</text>
<text x="757.7" y="257.7" font-size="14" fill="#000" textLength="22.80" lengthAdjust="spacingAndGlyphs">264</text>
<text x="31" y="278.7" font-size="14" fill="#000" textLength="180.20" lengthAdjust="spacingAndGlyphs">Кроссовки для баскетбола</text>
<text x="292.1" y="278.7" font-size="14" fill="#000" textLength="14.40" lengthAdjust="spacingAndGlyphs">98</text>
<text x="362.7" y="278.7" font-size="14" fill="#000" textLength="22.80" lengthAdjust="spacingAndGlyphs">103</text>
<text x="450.1" y="278.7" font-size="14" fill="#000" textLength="14.40" lengthAdjust="spacingAndGlyphs">82</text>
<text x="529.1" y="278.7" font-size="14" fill="#000" textLength="14.40" lengthAdjust="spacingAndGlyphs">86</text>
<text x="608.1" y="278.7" font-size="14" fill="#000" textLength="14.40" lengthAdjust="spacingAndGlyphs">69</text>
<text x="687.1" y="278.7" font-size="14" fill="#000" textLength="14.40" lengthAdjust="spacingAndGlyphs">73</text>
<text x="766.1" y="278.7" font-size="14" fill="#000" textLength="14.40" lengthAdjust="spacingAndGlyphs">58</text>
<text x="31" y="299.7" font-size="14" fill="#000" textLength="149.60" lengthAdjust="spacingAndGlyphs">Кроссовки теннисные</text>
<text x="283.7" y="299.7" font-size="14" fill="#000" textLength="22.80" lengthAdjust="spacingAndGlyphs">443</text>
<text x="362.7" y="299.7" font-size="14" fill="#000" textLength="22.80" lengthAdjust="spacingAndGlyphs">434</text>
<text x="441.7" y="299.7" font-size="14" fill="#000" textLength="22.80" lengthAdjust="spacingAndGlyphs">456</text>
<text x="520.7" y="299.7" font-size="14" fill="#000" textLength="22.80" lengthAdjust="spacingAndGlyphs">479</text>
<text x="599.7" y="299.7" font-size="14" fill="#000" textLength="22.80" lengthAdjust="spacingAndGlyphs">527</text>
<text x="678.7" y="299.7" font-size="14" fill="#000" textLength="22.80" lengthAdjust="spacingAndGlyphs">421</text>
<text x="757.7" y="299.7" font-size="14" fill="#000" textLength="22.80" lengthAdjust="spacingAndGlyphs">337</text>
<text x="31" y="320.7" font-size="14" fill="#000" textLength="35.70" lengthAdjust="spacingAndGlyphs">Кеды</text>
<text x="283.7" y="320.7" font-size="14" fill="#000" textLength="22.80" lengthAdjust="spacingAndGlyphs">557</text>
<text x="362.7" y="320.7" font-size="14" fill="#000" textLength="22.80" lengthAdjust="spacingAndGlyphs">446</text>
<text x="441.7" y="320.7" font-size="14" fill="#000" textLength="22.80" lengthAdjust="spacingAndGlyphs">468</text>
<text x="520.7" y="320.7" font-size="14" fill="#000" textLength="22.80" lengthAdjust="spacingAndGlyphs">374</text>
<text x="599.7" y="320.7" font-size="14" fill="#000" textLength="22.80" lengthAdjust="spacingAndGlyphs">393</text>
<text x="678.7" y="320.7" font-size="14" fill="#000" textLength="22.80" lengthAdjust="spacingAndGlyphs">314</text>
<text x="757.7" y="320.7" font-size="14" fill="#000" textLength="22.80" lengthAdjust="spacingAndGlyphs">346</text>
<rect x="389" y="262" width="79" height="42" fill="none" stroke="#217346" stroke-width="2"/>
<rect x="465" y="301" width="6" height="6" fill="#fff" />
<rect x="466" y="302" width="4" height="4" fill="#217346" />
<rect x="383.5" y="259.5" width="88" height="49" rx="8" fill="none" stroke="#ff0000" stroke-width="3"/>
<rect x="1021" y="220" width="1" height="448" fill="#a3aca8" />
<rect x="1" y="667" width="1021" height="1" fill="#a3aca8" />
<rect x="1022" y="200" width="20" height="468" fill="#e6e6e6" />
<rect x="1025.5" y="202.5" width="14" height="14" fill="#fff" stroke="#aab1ae"/>
<path d="M1029 211.4h7l-3.5-3.6z" fill="#666"/>
<rect x="1025.5" y="217.5" width="14" height="413" fill="#fff" stroke="#aab1ae"/>
<rect x="1025" y="631" width="15" height="22" fill="#dcdcdc" />
<rect x="1025.5" y="653.5" width="14" height="14" fill="#fff" stroke="#aab1ae"/>
<path d="M1029 658.5h7l-3.5 3.6z" fill="#666"/>
<rect x="1" y="668" width="1041" height="27" fill="#e6e6e6" />
<path d="M30 678l-3.6 3.6l3.6 3.6z" fill="#c0c0c0"/><path d="M57 678l3.6 3.6l-3.6 3.6z" fill="#c0c0c0"/>
<rect x="99" y="667" width="107" height="25" fill="#fff" />
<rect x="99" y="667" width="1" height="25" fill="#9aa5a0" />
<rect x="205" y="667" width="1" height="25" fill="#9aa5a0" />
<rect x="100" y="689.5" width="105" height="2.5" fill="#217346" />
<text x="111.4" y="685" font-size="14" fill="#217346" font-weight="bold" textLength="82.40" lengthAdjust="spacingAndGlyphs">microexcel.ru</text>
<circle cx="247" cy="680.6" r="7.2" fill="none" stroke="#666" stroke-width="1.2"/><path d="M247 676.6v8M243 680.6h8" stroke="#666" stroke-width="1.4"/>
<rect x="625.5" y="676" width="1.6" height="1.6" fill="#9a9a9a" />
<rect x="625.5" y="681" width="1.6" height="1.6" fill="#9a9a9a" />
<rect x="625.5" y="686" width="1.6" height="1.6" fill="#9a9a9a" />
<rect x="975" y="674" width="34" height="15" fill="#dcdcdc" />
<rect x="642.5" y="674.5" width="14" height="14" fill="#fff" stroke="#aab1ae"/>
<rect x="657.5" y="674.5" width="317" height="14" fill="#fff" stroke="#aab1ae"/>
<rect x="657" y="674" width="2" height="15" fill="#b0b6b3" />
<path d="M651.6 677.6l-4 4l4 4z" fill="#666"/>
<rect x="1009.5" y="674.5" width="14.5" height="14.5" fill="#fff" stroke="#aab1ae"/>
<path d="M1014.6 678l4 3.8l-4 3.8z" fill="#666"/>
<rect x="1" y="695" width="1041" height="1" fill="#d8d8d8" />
<rect x="1" y="696" width="1041" height="20" fill="#f3f3f3" />
<rect x="1" y="716" width="1041" height="1" fill="#c8c8c8" />
<circle cx="9.9" cy="701.9" r="2.9" fill="#232c39"/><path d="M8.6 706v5.4h10.8v-10.6h-5.2" fill="none" stroke="#232c39" stroke-width="1.2"/><rect x="14.2" y="700.2" width="5.8" height="2.3" fill="#232c39"/><g fill="#232c39"><rect x="9.9" y="707.0" width="2" height="1.2"/><rect x="9.9" y="709.1" width="2" height="1.2"/><rect x="13" y="704.8" width="2" height="1.2"/><rect x="13" y="707.0" width="2" height="1.2"/><rect x="13" y="709.1" width="2" height="1.2"/><rect x="16.1" y="704.8" width="2" height="1.2"/><rect x="16.1" y="707.0" width="2" height="1.2"/><rect x="16.1" y="709.1" width="2" height="1.2"/></g>
<text x="483.7" y="708.5" font-size="11" fill="#262626" textLength="68.10" lengthAdjust="spacingAndGlyphs">Среднее: 269</text>
<text x="568.5" y="708.5" font-size="11" fill="#262626" textLength="73.10" lengthAdjust="spacingAndGlyphs">Количество: 2</text>
<text x="658.8" y="708.5" font-size="11" fill="#262626" textLength="56.80" lengthAdjust="spacingAndGlyphs">Сумма: 538</text>
<rect x="743.5" y="696" width="36.5" height="20" fill="#c6c6c6" />
<g fill="none" stroke="#666" stroke-width="1"><path d="M755.5 699.5h12v12h-12zM755.5 703.5h12M755.5 707.5h12M759.5 699.5v12M763.5 699.5v12"/></g>
<g fill="none" stroke="#666" stroke-width="1"><path d="M793.5 699.5h13v12h-13z"/><path d="M796.5 702.5h7v6h-7z"/><path d="M798 704.5h4M798 706.5h4"/></g>
<g fill="none" stroke="#666" stroke-width="1"><path d="M831.5 699.5h13v12h-13z"/><path d="M835.5 699.5v5h5v-5"/></g>
<rect x="862" y="706" width="5" height="1.6" fill="#444" />
<rect x="872" y="706" width="100" height="1" fill="#9a9a9a" />
<rect x="920" y="701" width="5" height="10" fill="#666" />
<path d="M975 706.5h7M978.5 703v7" stroke="#444" stroke-width="1.6"/>
<text x="994.4" y="708.7" font-size="11.4" fill="#262626" textLength="29.00" lengthAdjust="spacingAndGlyphs">100 %</text>
</svg>
</body></html>
